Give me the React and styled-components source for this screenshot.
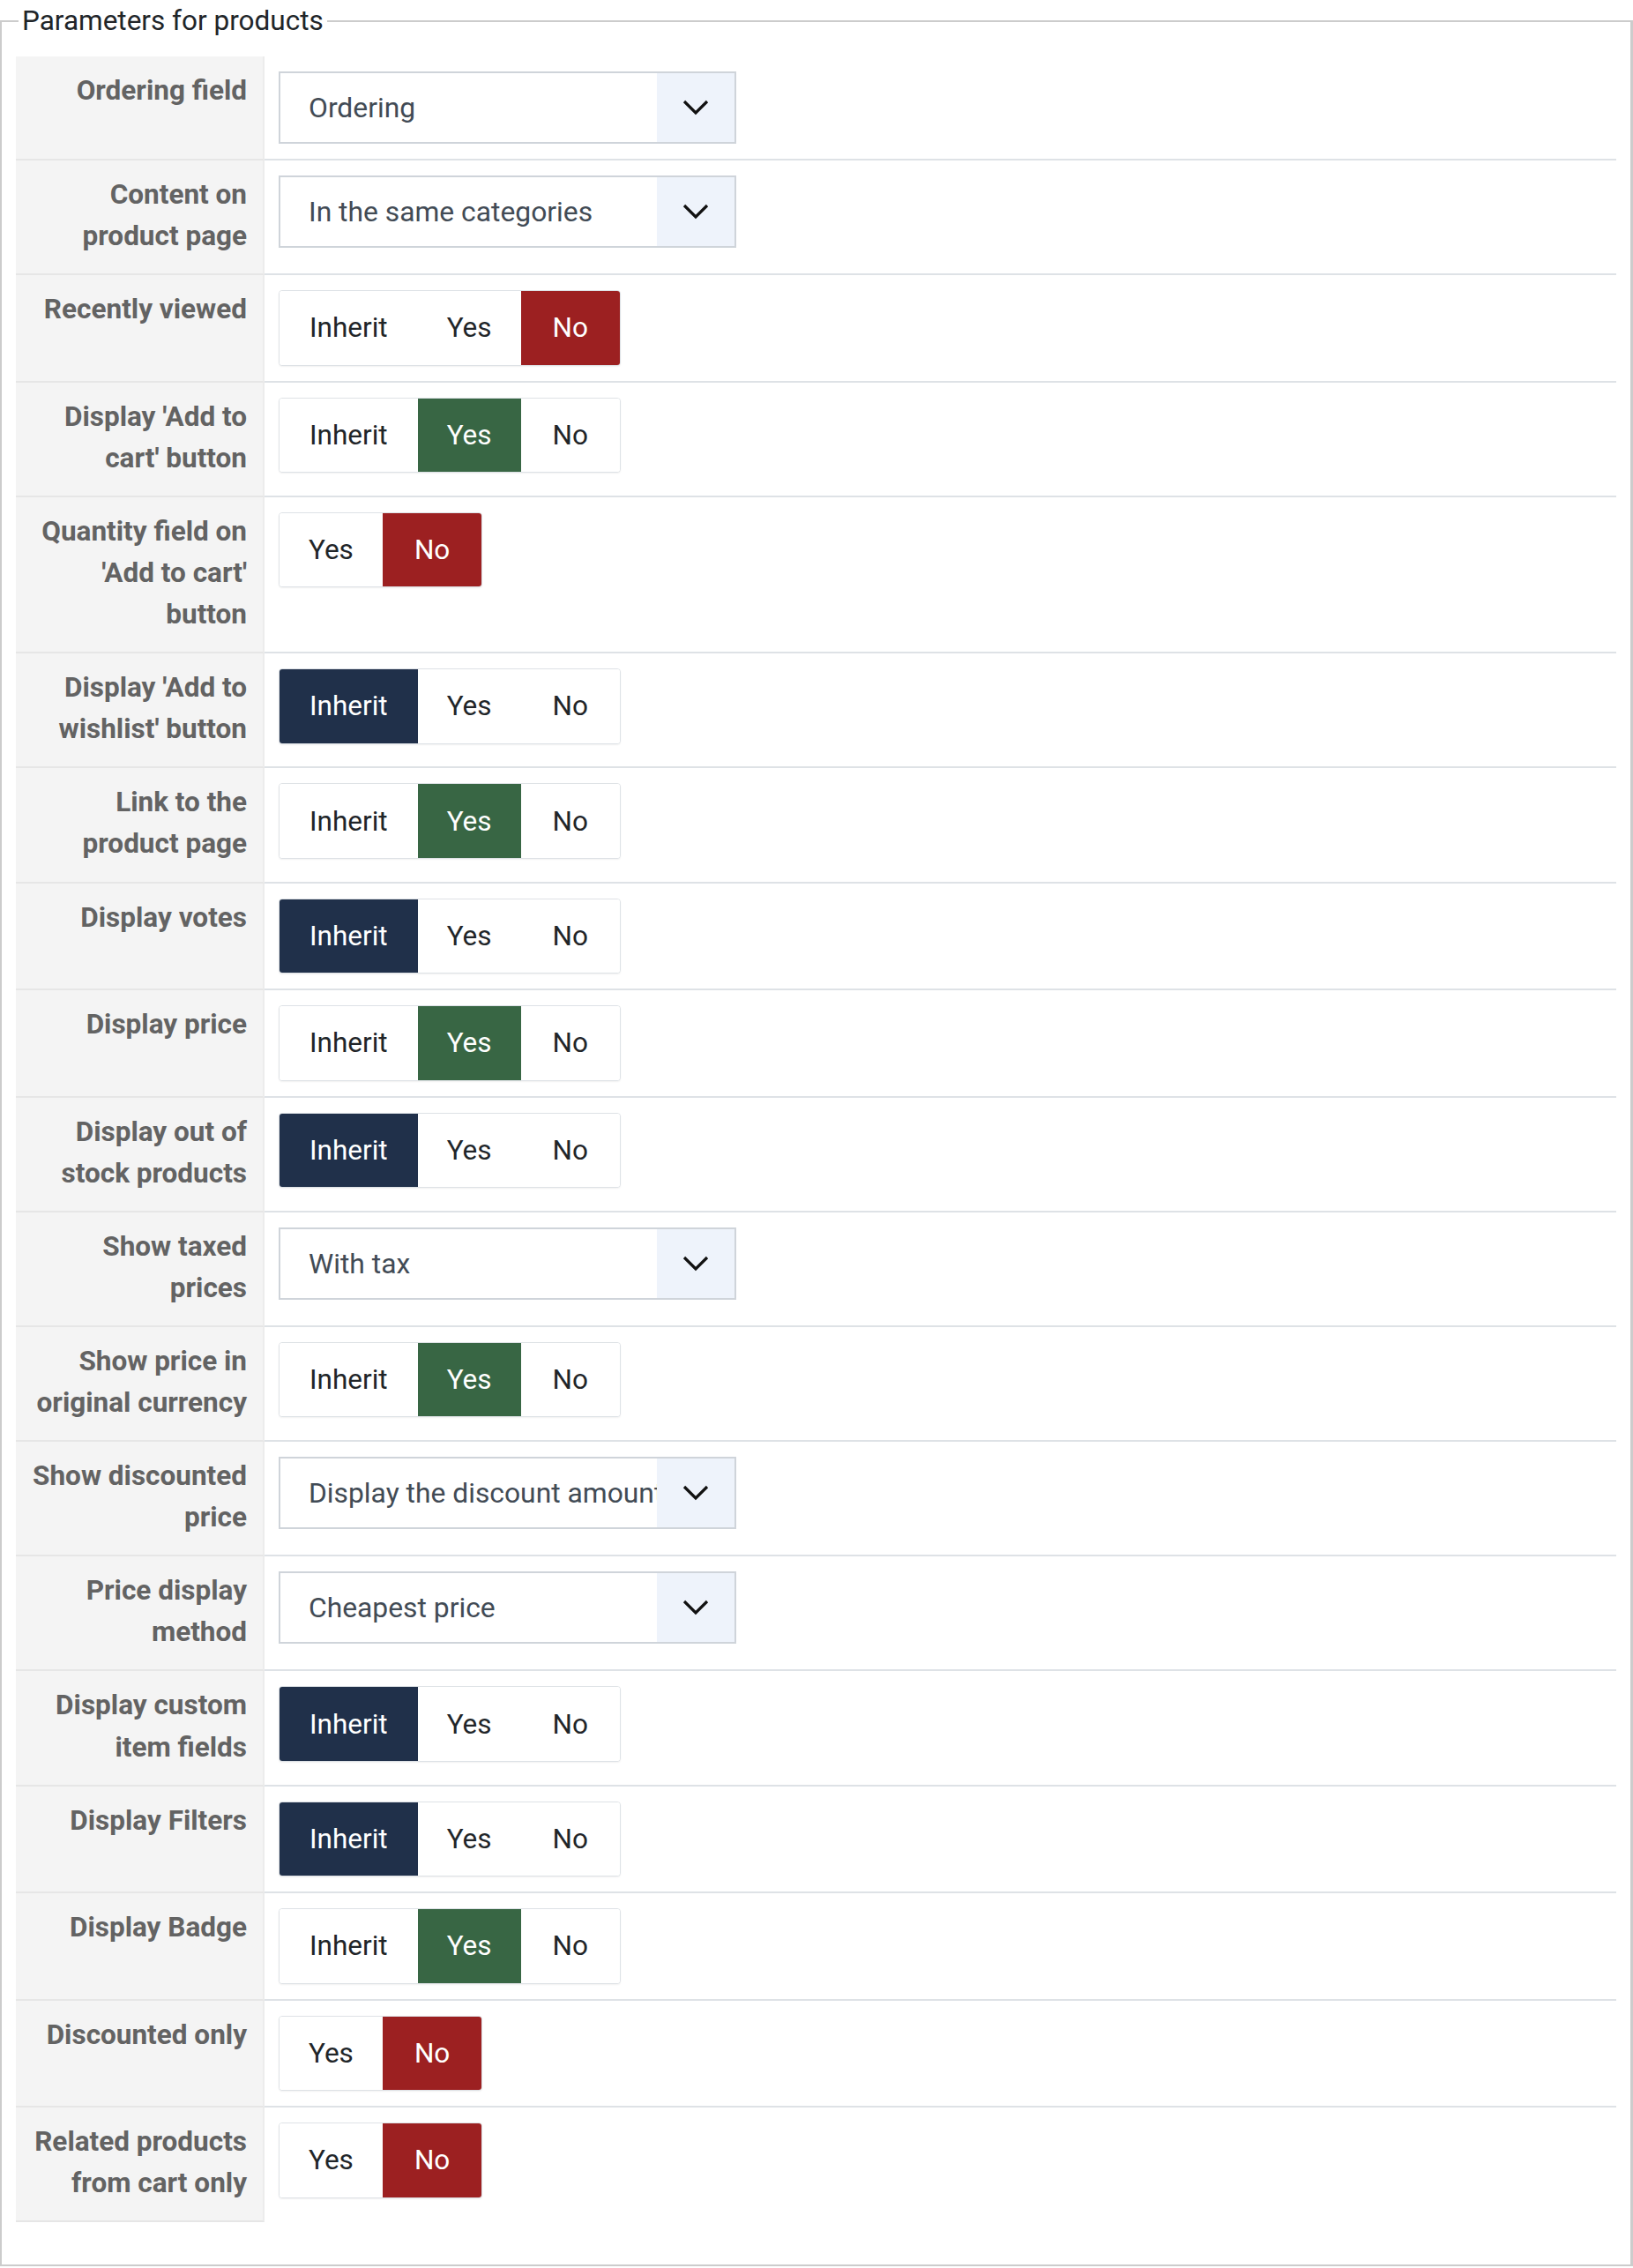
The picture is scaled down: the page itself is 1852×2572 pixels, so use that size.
import React from 'react';
import styled, { createGlobalStyle } from 'styled-components';

const GlobalStyle = createGlobalStyle`
  html, body {
    margin: 0;
    padding: 0;
    background: #ffffff;
  }
  body {
    font-family: Roboto, 'Liberation Sans', sans-serif;
  }
  * {
    box-sizing: border-box;
  }
`;

const Fieldset = styled.fieldset`
  margin: 0;
  min-width: 0;
  width: 1852px;
  min-height: 2570px;
  padding: 16px 16px 46px 16px;
  border: 2px solid #cccccc;
  border-right-width: 3px;
`;

const Legend = styled.legend`
  margin-left: 3px;
  padding: 0 4px;
  font-size: 31.5px;
  line-height: 48px;
  color: #212529;
`;

const Table = styled.div`
  display: grid;
  grid-template-columns: 282px 1fr;
`;

const Label = styled.div`
  background: #f4f4f4;
  border-right: 2px solid #ececec;
  border-bottom: 2px solid #e6e6e6;
  padding: 15px 18px 19px 10px;
  text-align: right;
  font-size: 31.5px;
  font-weight: 700;
  line-height: 47.1px;
  color: #636363;
`;

const Value = styled.div`
  padding: 17px 16px;
  border-bottom: ${({ $last }) => ($last ? '2px solid transparent' : '2px solid #dee2e6')};
  display: flex;
  align-items: flex-start;
`;

const Select = styled.div`
  width: 519px;
  height: 82px;
  display: flex;
  border: 2px solid #cfd4da;
  background: #ffffff;
`;

const SelectText = styled.div`
  flex: 1;
  min-width: 0;
  overflow: hidden;
  white-space: nowrap;
  padding-left: 32px;
  display: flex;
  align-items: center;
  font-size: 31.8px;
  color: #424b55;
`;

const SelectArrow = styled.div`
  width: 88px;
  flex: none;
  background: #eef3fb;
  display: flex;
  align-items: center;
  justify-content: center;
`;

const Switcher = styled.div`
  display: inline-flex;
  border: 1px solid #dee2e6;
  border-radius: 4px;
  box-shadow: 0 1px 2px rgba(0, 0, 0, 0.06);
  overflow: hidden;
  background: #ffffff;
`;

const activeColors = {
  Inherit: '#20304a',
  Yes: '#386644',
  No: '#9c2021',
};

const Option = styled.div`
  height: 83.5px;
  padding: 0 ${({ $pad }) => $pad}px;
  display: flex;
  align-items: center;
  font-size: 31.5px;
  color: ${({ $active }) => ($active ? '#ffffff' : '#212529')};
  background: ${({ $active, $name }) => ($active ? activeColors[$name] : '#ffffff')};
`;

const Chevron = () => (
  <svg width="30" height="18" viewBox="0 0 30 18">
    <polyline points="2,2 15,15 28,2" fill="none" stroke="#111" strokeWidth="3.2" />
  </svg>
);

const padFor = { Inherit: 34, Yes: 33, No: 36 };

const rows = [
  { label: 'Ordering field', select: 'Ordering' },
  { label: 'Content on product page', select: 'In the same categories' },
  { label: 'Recently viewed', options: ['Inherit', 'Yes', 'No'], value: 'No' },
  { label: "Display 'Add to cart' button", options: ['Inherit', 'Yes', 'No'], value: 'Yes' },
  { label: "Quantity field on 'Add to cart' button", options: ['Yes', 'No'], value: 'No' },
  { label: "Display 'Add to wishlist' button", options: ['Inherit', 'Yes', 'No'], value: 'Inherit' },
  { label: 'Link to the product page', options: ['Inherit', 'Yes', 'No'], value: 'Yes' },
  { label: 'Display votes', options: ['Inherit', 'Yes', 'No'], value: 'Inherit' },
  { label: 'Display price', options: ['Inherit', 'Yes', 'No'], value: 'Yes' },
  { label: 'Display out of stock products', options: ['Inherit', 'Yes', 'No'], value: 'Inherit' },
  { label: 'Show taxed prices', select: 'With tax' },
  { label: 'Show price in original currency', options: ['Inherit', 'Yes', 'No'], value: 'Yes' },
  { label: 'Show discounted price', select: 'Display the discount amount' },
  { label: 'Price display method', select: 'Cheapest price' },
  { label: 'Display custom item fields', options: ['Inherit', 'Yes', 'No'], value: 'Inherit' },
  { label: 'Display Filters', options: ['Inherit', 'Yes', 'No'], value: 'Inherit' },
  { label: 'Display Badge', options: ['Inherit', 'Yes', 'No'], value: 'Yes' },
  { label: 'Discounted only', options: ['Yes', 'No'], value: 'No' },
  { label: 'Related products from cart only', options: ['Yes', 'No'], value: 'No' },
];

const App = () => {
  return (
    <>
      <GlobalStyle />
      <Fieldset>
        <Legend>Parameters for products</Legend>
        <Table>
          {rows.map((row, i) => (
            <React.Fragment key={row.label}>
              <Label>{row.label}</Label>
              <Value $last={i === rows.length - 1}>
                {row.select ? (
                  <Select>
                    <SelectText>{row.select}</SelectText>
                    <SelectArrow>
                      <Chevron />
                    </SelectArrow>
                  </Select>
                ) : (
                  <Switcher>
                    {row.options.map((opt) => (
                      <Option
                        key={opt}
                        $name={opt}
                        $pad={padFor[opt]}
                        $active={opt === row.value}
                      >
                        {opt}
                      </Option>
                    ))}
                  </Switcher>
                )}
              </Value>
            </React.Fragment>
          ))}
        </Table>
      </Fieldset>
    </>
  );
};

export default App;
